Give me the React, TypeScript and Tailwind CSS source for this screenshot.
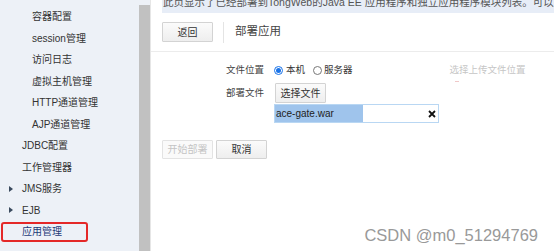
import React from "react";

const FONT = { fontFamily: '"Liberation Sans", "Noto Sans CJK SC", sans-serif' };

function Arrow() {
  return (
    <svg width="5" height="6" viewBox="0 0 5 6" className="absolute left-[9px] top-1/2 -translate-y-1/2">
      <path d="M0 0 L4 3 L0 6 Z" fill="#3a4a5e" />
    </svg>
  );
}

function Item({ label, indent, arrow, active, className = "" }: { label: string; indent: number; arrow?: boolean; active?: boolean; className?: string }) {
  return (
    <div className={`relative h-[21.5px] flex items-center ${className}`}>
      {arrow && <Arrow />}
      {active && (
        <div className="absolute left-[1px] top-[1px] w-[87px] h-[20px] border-2 border-[#e42828] rounded-[3px]" />
      )}
      <span
        className={`text-[10px] whitespace-nowrap ${active ? "text-[#1d3a78]" : "text-[#333]"}`}
        style={{ paddingLeft: indent }}
      >
        {label}
      </span>
    </div>
  );
}

function Btn({ children, disabled, className = "" }: { children: React.ReactNode; disabled?: boolean; className?: string }) {
  return (
    <div
      className={`h-[19px] w-[51px] flex items-center justify-center text-[10px] border rounded-[1px] ${
        disabled
          ? "border-[#e3e3e3] bg-[#fafafa] text-[#c4c4c4]"
          : "border-[#d3d3d3] bg-gradient-to-b from-[#fbfbfb] to-[#eeeeee] text-[#333]"
      } ${className}`}
    >
      {children}
    </div>
  );
}

export default function App() {
  return (
    <div className="w-[554px] h-[251px] flex overflow-hidden bg-white" style={FONT}>
      {/* sidebar */}
      <div className="w-[139px] h-full bg-[#edf1f7] pt-[6px] shrink-0">
        <Item label="容器配置" indent={32} />
        <Item label="session管理" indent={32} />
        <Item label="访问日志" indent={32} />
        <Item label="虚拟主机管理" indent={32} />
        <Item label="HTTP通道管理" indent={32} />
        <Item label="AJP通道管理" indent={32} />
        <Item label="JDBC配置" indent={22} />
        <Item label="工作管理器" indent={22} />
        <Item label="JMS服务" indent={22} arrow />
        <Item label="EJB" indent={22} arrow />
        <Item label="应用管理" indent={22} active />
        <Item label="日志服务" indent={22} className="mt-[3px]" />
      </div>
      {/* scrollbar */}
      <div className="w-[11px] h-full bg-[#edf1f7] pt-[5px] shrink-0">
        <div className="w-full h-full bg-[#c1c1c1]" />
      </div>
      {/* main */}
      <div className="flex-1 h-full border-l border-[#e6e6e6] flex flex-col min-w-0">
        <div className="ml-[11px] h-[13px] bg-[#e7edf7] overflow-hidden">
          <div className="-mt-[5px] pl-[1px] text-[10.5px] leading-[14px] text-[#555] whitespace-nowrap">
            此页显示了已经部署到TongWeb的Java EE 应用程序和独立应用程序模块列表。可以对所安装的应用程序进行管理。
          </div>
        </div>
        <div className="border-b border-[#ececec] h-[39px] pt-[9px] pl-[11px] flex items-start">
          <Btn className="h-[20px]">返回</Btn>
          <div className="ml-[10px] w-px h-[21px] bg-[#e4e4e4]" />
          <div className="ml-[11px] h-[20px] flex items-center text-[11.5px] text-[#444]">部署应用</div>
        </div>
        <div className="pl-[11px] pt-[9px]">
          <div className="flex items-center h-[18px]">
            <div className="w-[102px] text-right text-[9.5px] text-[#444]">文件位置</div>
            <div className="ml-[10px] w-[9px] h-[9px] rounded-full border border-[#1a73e8] flex items-center justify-center">
              <div className="w-[5px] h-[5px] rounded-full bg-[#1a73e8]" />
            </div>
            <span className="ml-[3px] text-[9.5px] text-[#333]">本机</span>
            <div className="ml-[8px] w-[9px] h-[9px] rounded-full border border-[#777]" />
            <span className="ml-[2px] text-[9.5px] text-[#333]">服务器</span>
            <div className="ml-[97px] relative text-[9.5px] text-[#c6c6c6] whitespace-nowrap">
              选择上传文件位置
              <div className="absolute left-[5px] top-[18px] w-[4px] h-px bg-[#f0c8c8]" />
            </div>
          </div>
          <div className="flex mt-[4px]">
            <div className="w-[102px] h-[20px] flex items-center justify-end text-[9.5px] text-[#444]">部署文件</div>
            <div className="ml-[10px] flex flex-col">
              <Btn className="h-[20px] ml-[1px]">选择文件</Btn>
              <div className="mt-[1px] w-[165px] h-[19px] border border-[#b9d7f3] flex items-center">
                <div className="w-[88px] h-full bg-[#9fc4ec] flex items-center text-[10px] text-[#222] pl-[1px]">
                  ace-gate.war
                </div>
                <div className="flex-1" />
                <svg width="8" height="8" viewBox="0 0 8 8" className="mr-[2px]">
                  <path d="M1 1 L7 7 M7 1 L1 7" stroke="#111" strokeWidth="1.8" />
                </svg>
              </div>
            </div>
          </div>
          <div className="flex mt-[17px] gap-[3px]">
            <Btn disabled>开始部署</Btn>
            <Btn>取消</Btn>
          </div>
        </div>
        <div className="mt-auto mb-[8px] mr-[16px] self-end text-[16.5px] text-[#999] leading-none whitespace-nowrap" style={{ textShadow: "0 0 2px #fff" }}>
          CSDN @m0_51294769
        </div>
      </div>
    </div>
  );
}
